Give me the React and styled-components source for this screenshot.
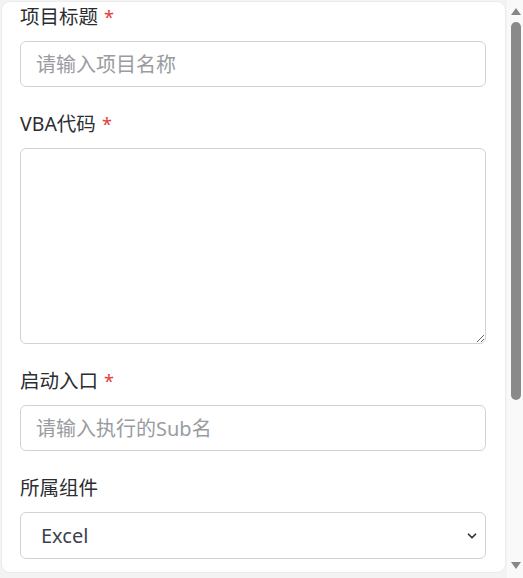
import React from "react";
import styled, { createGlobalStyle } from "styled-components";
import { ChevronDown } from "lucide-react";

const GlobalStyle = createGlobalStyle`
  html, body {
    margin: 0;
    padding: 0;
    overflow: hidden;
    background: #f3f3f3;
  }
  * {
    box-sizing: border-box;
  }
`;

export default function App() {
  return (
    <>
      <GlobalStyle />
      <Frame>
        <Viewport>
          <Card>
            <Field>
              <Label>
                项目标题 <Required>*</Required>
              </Label>
              <Input placeholder="请输入项目名称" />
            </Field>
            <Field>
              <Label>
                VBA代码 <Required>*</Required>
              </Label>
              <TextArea />
            </Field>
            <Field>
              <Label>
                启动入口 <Required>*</Required>
              </Label>
              <Input placeholder="请输入执行的Sub名" />
            </Field>
            <Field $last>
              <Label>所属组件</Label>
              <SelectWrap>
                <Select defaultValue="Excel">
                  <option>Excel</option>
                  <option>Word</option>
                  <option>PowerPoint</option>
                </Select>
                <Chevron size={14} strokeWidth={3} />
              </SelectWrap>
            </Field>
          </Card>
        </Viewport>
        <ScrollBar>
          <Arrow viewBox="0 0 10 8" width="10" height="8">
            <polygon points="0,8 10,8 5,1" fill="#878787" />
          </Arrow>
          <Thumb />
          <Arrow viewBox="0 0 10 8" width="10" height="8">
            <polygon points="0,0 10,0 5,7" fill="#878787" />
          </Arrow>
        </ScrollBar>
      </Frame>
    </>
  );
}

const Frame = styled.div`
  display: flex;
  width: 523px;
  height: 578px;
  font-family: "Segoe UI", "Noto Sans", "Noto Sans CJK SC", sans-serif;
`;

const Viewport = styled.div`
  flex: 1;
  height: 578px;
  overflow: hidden;
  background: #f3f3f3;
  padding: 1px 0 0 1px;
`;

const Card = styled.div`
  background: #ffffff;
  border: 1px solid #ececec;
  border-radius: 9px;
  width: 505px;
  padding: 0 18px 13px;
`;

const ScrollBar = styled.div`
  width: 16px;
  height: 578px;
  background: #f9f9f9;
  display: flex;
  flex-direction: column;
  align-items: center;
  padding: 7px 0 8px 1px;
`;

const Arrow = styled.svg`
  flex: none;
  display: block;
`;

const Thumb = styled.div`
  width: 10px;
  height: 378px;
  margin: 7px 0 auto;
  border-radius: 5px;
  background: #8a8a8a;
`;

const Field = styled.div`
  display: flex;
  flex-direction: column;
  margin-bottom: ${(p) => (p.$last ? "0" : "22px")};
`;

const Label = styled.label`
  font-size: 19.5px;
  line-height: 30px;
  height: 30px;
  color: #2b2d31;
  margin-bottom: 9px;
  white-space: nowrap;
`;

const Required = styled.span`
  color: #e53935;
  font-size: 18px;
  margin-left: 1px;
`;

const Input = styled.input`
  width: 466px;
  height: 46px;
  border: 1px solid #cfd3d9;
  border-radius: 6px;
  padding: 0 15px;
  font-family: inherit;
  font-size: 20px;
  color: #303133;
  background: #fff;
  outline: none;

  &::placeholder {
    color: #9a9ca1;
  }
`;

const TextArea = styled.textarea`
  width: 466px;
  height: 196px;
  border: 1px solid #cfd3d9;
  border-radius: 6px;
  padding: 10px 15px;
  font-family: inherit;
  font-size: 20px;
  color: #303133;
  background: #fff;
  outline: none;
  resize: vertical;
`;

const SelectWrap = styled.div`
  position: relative;
  width: 466px;
`;

const Select = styled.select`
  appearance: none;
  width: 466px;
  height: 47px;
  border: 1px solid #cfd3d9;
  border-radius: 6px;
  padding: 0 40px 0 20px;
  font-family: inherit;
  font-size: 20px;
  color: #3c4150;
  background: #fff;
  outline: none;
`;

const Chevron = styled(ChevronDown)`
  position: absolute;
  right: 7px;
  top: 17px;
  color: #333;
  pointer-events: none;
`;
